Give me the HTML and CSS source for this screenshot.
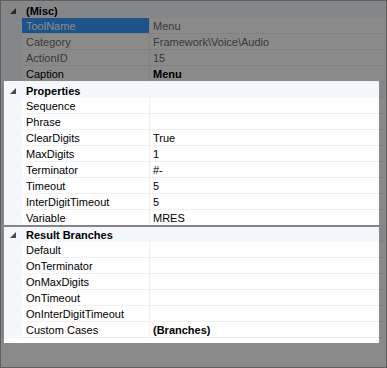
FILE: index.html
```html
<!DOCTYPE html>
<html lang="en">
<head>
    <meta charset="UTF-8">
    <title>Property Grid</title>
    <link rel="stylesheet" href="styles.css">
</head>
<body>
    <div class="grid">
        <div class="cat"><span class="glyph"><svg width="6" height="6" viewBox="0 0 6 6"><polygon points="6,0 6,6 0,6" fill="#4a4a4a"/></svg></span>(Misc)</div>
        <div class="row sel ro"><span class="margin"></span><span class="name">ToolName</span><span class="value">Menu</span></div>
        <div class="row ro"><span class="margin"></span><span class="name">Category</span><span class="value">Framework\Voice\Audio</span></div>
        <div class="row ro"><span class="margin"></span><span class="name">ActionID</span><span class="value">15</span></div>
        <div class="row"><span class="margin"></span><span class="name">Caption</span><span class="value bold">Menu</span></div>

        <div class="cat"><span class="glyph"><svg width="6" height="6" viewBox="0 0 6 6"><polygon points="6,0 6,6 0,6" fill="#4a4a4a"/></svg></span>Properties</div>
        <div class="row"><span class="margin"></span><span class="name">Sequence</span><span class="value"></span></div>
        <div class="row"><span class="margin"></span><span class="name">Phrase</span><span class="value"></span></div>
        <div class="row"><span class="margin"></span><span class="name">ClearDigits</span><span class="value">True</span></div>
        <div class="row"><span class="margin"></span><span class="name">MaxDigits</span><span class="value">1</span></div>
        <div class="row"><span class="margin"></span><span class="name">Terminator</span><span class="value">#-</span></div>
        <div class="row"><span class="margin"></span><span class="name">Timeout</span><span class="value">5</span></div>
        <div class="row"><span class="margin"></span><span class="name">InterDigitTimeout</span><span class="value">5</span></div>
        <div class="row"><span class="margin"></span><span class="name">Variable</span><span class="value">MRES</span></div>

        <div class="cat"><span class="glyph"><svg width="6" height="6" viewBox="0 0 6 6"><polygon points="6,0 6,6 0,6" fill="#4a4a4a"/></svg></span>Result Branches</div>
        <div class="row"><span class="margin"></span><span class="name">Default</span><span class="value"></span></div>
        <div class="row"><span class="margin"></span><span class="name">OnTerminator</span><span class="value"></span></div>
        <div class="row"><span class="margin"></span><span class="name">OnMaxDigits</span><span class="value"></span></div>
        <div class="row"><span class="margin"></span><span class="name">OnTimeout</span><span class="value"></span></div>
        <div class="row"><span class="margin"></span><span class="name">OnInterDigitTimeout</span><span class="value"></span></div>
        <div class="row"><span class="margin"></span><span class="name">Custom Cases</span><span class="value bold">(Branches)</span></div>
    </div>

    <!-- dimmed overlay around the two highlighted sections -->
    <div class="dim dim-top"></div>
    <div class="dim dim-left"></div>
    <div class="dim dim-right"></div>
    <div class="dim dim-mid"></div>
    <div class="dim dim-bottom"></div>
</body>
</html>
```

FILE: styles.css
```css
body {
    margin: 0;
    font-family: "Liberation Sans", Arial, sans-serif;
    font-size: 11px;
    color: #000;
    background: #fff;
}
.grid {
    width: 387px;
    height: 368px;
    box-sizing: border-box;
    border: 1px solid #adadad;
    padding-top: 1px;
    background: #fff;
    overflow: hidden;
}
.cat {
    display: flex;
    align-items: center;
    height: 16px;
    padding-top: 1px;
    box-sizing: border-box;
    background: #f4f7fc;
    font-weight: bold;
}
.glyph {
    display: flex;
    width: 25px;
    padding-left: 9px;
    box-sizing: border-box;
}
.row {
    display: grid;
    grid-template-columns: 21px 128px 1fr;
    height: 16px;
}
.margin {
    background: #f4f7fc;
}
.name,
.value {
    height: 15px;
    line-height: 17px;
    border-bottom: 1px solid #f0f0f0;
    white-space: nowrap;
    overflow: hidden;
}
.name {
    padding-left: 4px;
    border-right: 1px solid #f0f0f0;
}
.value {
    padding-left: 3px;
}
.bold {
    font-weight: bold;
}
.ro .name,
.ro .value {
    color: #6d6d6d;
}
.sel .name {
    background: #3399ff;
    color: #fff;
}
.dim {
    position: absolute;
    background: rgba(0, 0, 0, 0.46);
}
.dim-top {
    left: 0;
    top: 0;
    width: 387px;
    height: 81px;
}
.dim-left {
    left: 0;
    top: 81px;
    width: 4px;
    height: 262px;
}
.dim-right {
    left: 379px;
    top: 81px;
    width: 8px;
    height: 262px;
}
.dim-mid {
    left: 4px;
    top: 225px;
    width: 375px;
    height: 2px;
}
.dim-bottom {
    left: 0;
    top: 343px;
    width: 387px;
    height: 25px;
}
```
